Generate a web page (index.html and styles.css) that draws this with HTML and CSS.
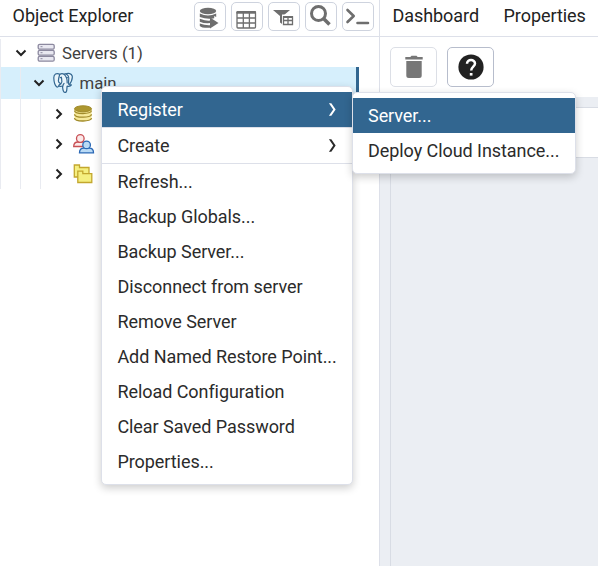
FILE: index.html
```html
<!DOCTYPE html>
<html lang="en">
<head>
<meta charset="utf-8">
<title>Object Explorer</title>
<link rel="stylesheet" href="styles.css">
</head>
<body>
<div class="app">
  <section class="explorer">
    <header class="explorer-head">
      <h1 class="title">Object Explorer</h1>
      <div class="tools">
        <button class="tool" aria-label="Query tool"><svg width="32" height="29" viewBox="0 0 32 29" fill="#6e6e6e"><ellipse cx="14" cy="9" rx="8.2" ry="3.2"/><path d="M5.800 11.500q8.200 4 16.400 0v3.500l-2-1v2.200q-7 1.500-14.400-1.200zM5.800 16.800q7 2.500 10.500 1.800v2.500q-6 .6-10.500-1.400zM5.800 21.500q5 2 10.500 1.700v2.600q-9 .3-10.500-1.800z"/><path d="M16 15.500l8.500 5.500-8.500 5.500z"/></svg></button>
        <button class="tool" aria-label="View data"><svg width="32" height="29" viewBox="0 0 32 29"><rect x="6" y="10.500" width="18.500" height="15.500" rx="1" fill="none" stroke="#6e6e6e" stroke-width="1.300"/><path d="M5.500 10.500h19.500M6 16h18M6 21h18M12.300 11v15M18.400 11v15" fill="none" stroke="#6e6e6e" stroke-width="1.300"/><path d="M5.400 11.500V10q0-1 1-1h17.700q1 0 1 1v1.500z" fill="#6e6e6e"/></svg></button>
        <button class="tool" aria-label="Filtered rows"><svg width="32" height="29" viewBox="0 0 32 29"><path d="M5 8h17l-6.500 5.500v9.500l-3.500-2.500v-6.500z" fill="#6e6e6e"/><path d="M14 12.500h12v12H14z" fill="#fff"/><path d="M15.500 15h9v7.500h-9zM15.500 18.500h9M20 15v7.500" fill="none" stroke="#6e6e6e" stroke-width="1.300"/><path d="M15 14h10v2H15z" fill="#6e6e6e"/></svg></button>
        <button class="tool" aria-label="Search"><svg width="32" height="29" viewBox="0 0 32 29" fill="none" stroke="#6e6e6e"><circle cx="13.500" cy="11.500" r="7" stroke-width="3"/><path d="M18.500 16.500l6 6" stroke-width="3.500"/></svg></button>
        <button class="tool" aria-label="PSQL"><svg width="32" height="29" viewBox="0 0 32 29" fill="none" stroke="#6e6e6e" stroke-width="2.600" stroke-linecap="round" stroke-linejoin="round"><path d="M5.500 8l6.200 6-6.200 6M15.500 21H26"/></svg></button>
      </div>
    </header>
    <div class="tree">
      <div class="row">
        <i class="guide"></i>
        <svg class="chev lvl0" viewBox="0 0 12 12"><path d="M1.500 3.500L6 8l4.500-4.500"/></svg>
        <svg class="ico" width="20" height="20" viewBox="0 0 20 20" fill="#e9e8f1" stroke="#8c899f" stroke-width="1.300"><rect x="1.200" y="1.300" width="16" height="4.900" rx="1.500"/><rect x="1.200" y="7.300" width="16" height="4.900" rx="1.500"/><rect x="1.200" y="13.300" width="16" height="4.900" rx="1.500"/><path d="M3.500 3.700h2M3.500 9.700h2M3.500 15.700h2" stroke-width="1"/></svg>
        <span class="label">Servers (1)</span>
      </div>
      <div class="row selected">
        <i class="guide"></i><i class="guide"></i>
        <svg class="chev lvl1" viewBox="0 0 12 12"><path d="M1.500 3.500L6 8l4.500-4.500"/></svg>
        <svg class="ico" width="20" height="22" viewBox="0 0 20 22" fill="#e9f5fb" stroke="#336791" stroke-width="1.200" stroke-linecap="round" stroke-linejoin="round"><path d="M6.800 2.200C3.500.8.700 2 .8 6c.1 3 1.400 7.500 2.800 8.800 1.100.8 1.700-.2 2.600-1.300M12.500 2c3-1.200 6-.4 6.700 2 .6 2.800-1.200 6.200-3 8.800"/><path d="M6.700 2.500c1.600-1.200 3.200-.9 4.300-.3 1.800-.8 4.300.5 4.700 3.200.4 2.300-.6 3.700 0 6.800.5 1 1.500.7 2.700.7-1 1.800-3 1.600-4.300 1.300-.4 2.600.2 6.200-2 6.300-2.300.1-2.300-2.700-2.600-6.500-1.700.6-3.500.6-3.500-.6 0-1.100 1.500-.8 1.900-1.700-1.200-.6-2.500-1-2.500-2.600 0-1.900.6-4.500 1.300-6.600z"/><path d="M7.900 11.700c2-2 .7-4.300.4-6.500M11 2.200c2 2 3.500 4.800 3.200 8.800M10 14c-.2-1 .3-1.900 1-2.500M7.300 5.600h.5M13.600 5.600h.8" fill="none"/></svg>
        <span class="label">main</span>
      </div>
      <div class="row">
        <i class="guide"></i><i class="guide"></i><i class="guide"></i>
        <svg class="chev lvl2" viewBox="0 0 12 12"><path d="M3.500 1.500L8 6l-4.500 4.500"/></svg>
        <svg class="ico" width="20" height="20" viewBox="0 0 20 20" stroke="#a18b2b" stroke-width="1"><path fill="#f6e99a" d="M1.500 4.500v9.800c0 4 17 4 17 0V4.500z" stroke="none"/><path fill="none" stroke-width="1.300" d="M1.500 6.500c0 4 17 4 17 0M1.500 10.200c0 4 17 4 17 0M1.500 14c0 4 17 4 17 0"/><ellipse cx="10" cy="4.800" rx="8.500" ry="3" fill="#ad972f"/></svg>
      </div>
      <div class="row">
        <i class="guide"></i><i class="guide"></i><i class="guide"></i>
        <svg class="chev lvl2" viewBox="0 0 12 12"><path d="M3.500 1.500L8 6l-4.500 4.500"/></svg>
        <svg class="ico" width="22" height="20" viewBox="0 0 22 20" stroke-width="1.300"><path fill="#fbe9e9" stroke="#c85055" d="M.7 12.500c0-3.200 2-4.500 4.300-4.500h4.800c2.200 0 3.500 1.500 3.500 4.500z"/><circle cx="7.300" cy="4.500" r="3.800" fill="#fbe9e9" stroke="#c85055"/><path fill="#b9daf5" stroke="#2a68b5" d="M6.500 18.800c0-3.500 2-4.700 4.300-4.700h5.500c2.600 0 4.200 1.500 4.200 4.700z"/><circle cx="13.600" cy="10.900" r="3.800" fill="#b9daf5" stroke="#2a68b5"/></svg>
      </div>
      <div class="row">
        <i class="guide"></i><i class="guide"></i><i class="guide"></i>
        <svg class="chev lvl2" viewBox="0 0 12 12"><path d="M3.500 1.500L8 6l-4.500 4.500"/></svg>
        <svg class="ico" width="20" height="20" viewBox="0 0 20 20" fill="#f5ef80" stroke="#c3a72e" stroke-width="1.300"><path d="M1.300 1h5.200v2.500h9.500v9.500H1.300z"/><path d="M4.800 7.200h5v2.500h9v8.800h-14z"/></svg>
      </div>
    </div>
  </section>
  <section class="workspace">
    <nav class="tabs"><span>Dashboard</span><span>Properties</span></nav>
    <div class="actions">
      <button class="action disabled" aria-label="Delete"><svg width="20" height="24" viewBox="0 0 20 24" fill="#777"><path d="M1.300 2h5L7.500.8h5L13.700 2h5v2.400H1.300zM2.300 6h15.400v14.500q0 2.500-2.500 2.500H4.800q-2.500 0-2.500-2.500z"/></svg></button>
      <button class="action" aria-label="Help"><svg width="26" height="26" viewBox="0 0 26 26"><circle cx="13" cy="13" r="12.600" fill="#222"/><path d="M9 9.800c0-5 8-5 8-.2 0 3-3.800 3.300-3.800 7" fill="none" stroke="#fff" stroke-width="2.500"/><path d="M11.800 19h2.700v2.600h-2.700z" fill="#fff"/></svg></button>
    </div>
    <div class="canvas"><div class="panel"><div class="panel-head"></div></div></div>
  </section>
</div>
<div class="menu main-menu">
  <div class="item active divided">Register<svg class="arrow" viewBox="0 0 10 16"><path d="M1 1h2.700l4.800 7-4.800 7H1l4.800-7z"/></svg></div>
  <div class="item divided">Create<svg class="arrow" viewBox="0 0 10 16"><path d="M1 1h2.700l4.800 7-4.800 7H1l4.800-7z"/></svg></div>
  <div class="item">Refresh...</div>
  <div class="item">Backup Globals...</div>
  <div class="item">Backup Server...</div>
  <div class="item">Disconnect from server</div>
  <div class="item">Remove Server</div>
  <div class="item">Add Named Restore Point...</div>
  <div class="item">Reload Configuration</div>
  <div class="item">Clear Saved Password</div>
  <div class="item">Properties...</div>
</div>
<div class="menu sub-menu">
  <div class="item active">Server...</div>
  <div class="item">Deploy Cloud Instance...</div>
</div>
</body>
</html>
```
FILE: styles.css
```css
* { box-sizing: border-box; }
body { margin: 0; width: 598px; height: 566px; overflow: hidden; background: #fff; color: #222; font: 18px Roboto, sans-serif; letter-spacing: -0.06px; }
button { padding: 0; background: #fff; display: flex; align-items: center; justify-content: center; }
.app { display: flex; height: 566px; }
.explorer { width: 380px; border-right: 1px solid #dde0e9; overflow: hidden; }
.explorer-head { height: 37px; border-bottom: 1px solid #dde0e9; display: flex; justify-content: space-between; padding: 2px 5px 0 12.6px; }
.title { margin: 0; font-size: 18px; font-weight: 400; line-height: 28px; }
.tools { display: flex; gap: 5px; }
.tool { width: 32px; height: 29px; border: 1px solid #ced3de; border-radius: 5px; }
.tool svg { flex: none; }
.row { height: 30px; display: flex; align-items: center; color: #404040; white-space: nowrap; font-size: 16.8px; letter-spacing: -0.03px; }
.row:first-child { padding-top: 2px; }
.row.selected { height: 32px; width: 359px; background: #d6effc; border-right: 3px solid #326690; }
.guide { width: 1px; height: 100%; margin-right: 19px; background: #e9ebf1; flex: none; }
.chev { width: 12px; height: 12px; flex: none; fill: none; stroke: #222; stroke-width: 2; }
.lvl0 { margin-left: -5px; }
.lvl1, .lvl2 { margin-left: -7px; }
.lvl0 + .ico { margin-left: 10px; }
.ico { margin-left: 8px; flex: none; }
.label { margin-left: 5px; }
.lvl1 ~ .label { margin-left: 6.5px; }
.workspace { flex: 1; display: flex; flex-direction: column; min-width: 0; }
.tabs { height: 37px; border-bottom: 1px solid #dde0e9; display: flex; gap: 24.5px; padding: 2px 0 0 12.5px; line-height: 28px; flex: none; }
.actions { height: 60px; display: flex; gap: 10px; padding: 10px; flex: none; }
.action { width: 47px; height: 40px; border: 1px solid #b7bdcc; border-radius: 5px; }
.disabled { border-color: #dcdfe6; }
.canvas { flex: 1; background: #ebeef3; padding: 10px 0 0 10px; }
.panel { height: 100%; border-left: 1px solid #d8dce4; border-top: 1px solid #d8dce4; }
.panel-head { height: 50px; background: #fff; border-bottom: 1px solid #d8dce4; }
.menu { position: absolute; background: #fff; color: #2b2b2b; border: 1px solid #dde0e9; border-radius: 5px; padding: 5px 0; box-shadow: 0 3px 8px rgba(0,0,0,.2); }
.main-menu { left: 101px; top: 86px; width: 252px; }
.sub-menu { left: 352px; top: 92px; width: 224px; }
.item { height: 35px; line-height: 35px; padding: 0 15px 0 15.4px; display: flex; align-items: center; justify-content: space-between; white-space: nowrap; }
.sub-menu .item { padding-left: 15px; }
.divided { height: 36px; border-bottom: 1px solid #dde0e9; }
.active { background: #326690; color: #fff; }
.arrow { width: 9px; height: 15px; fill: currentColor; }
```
